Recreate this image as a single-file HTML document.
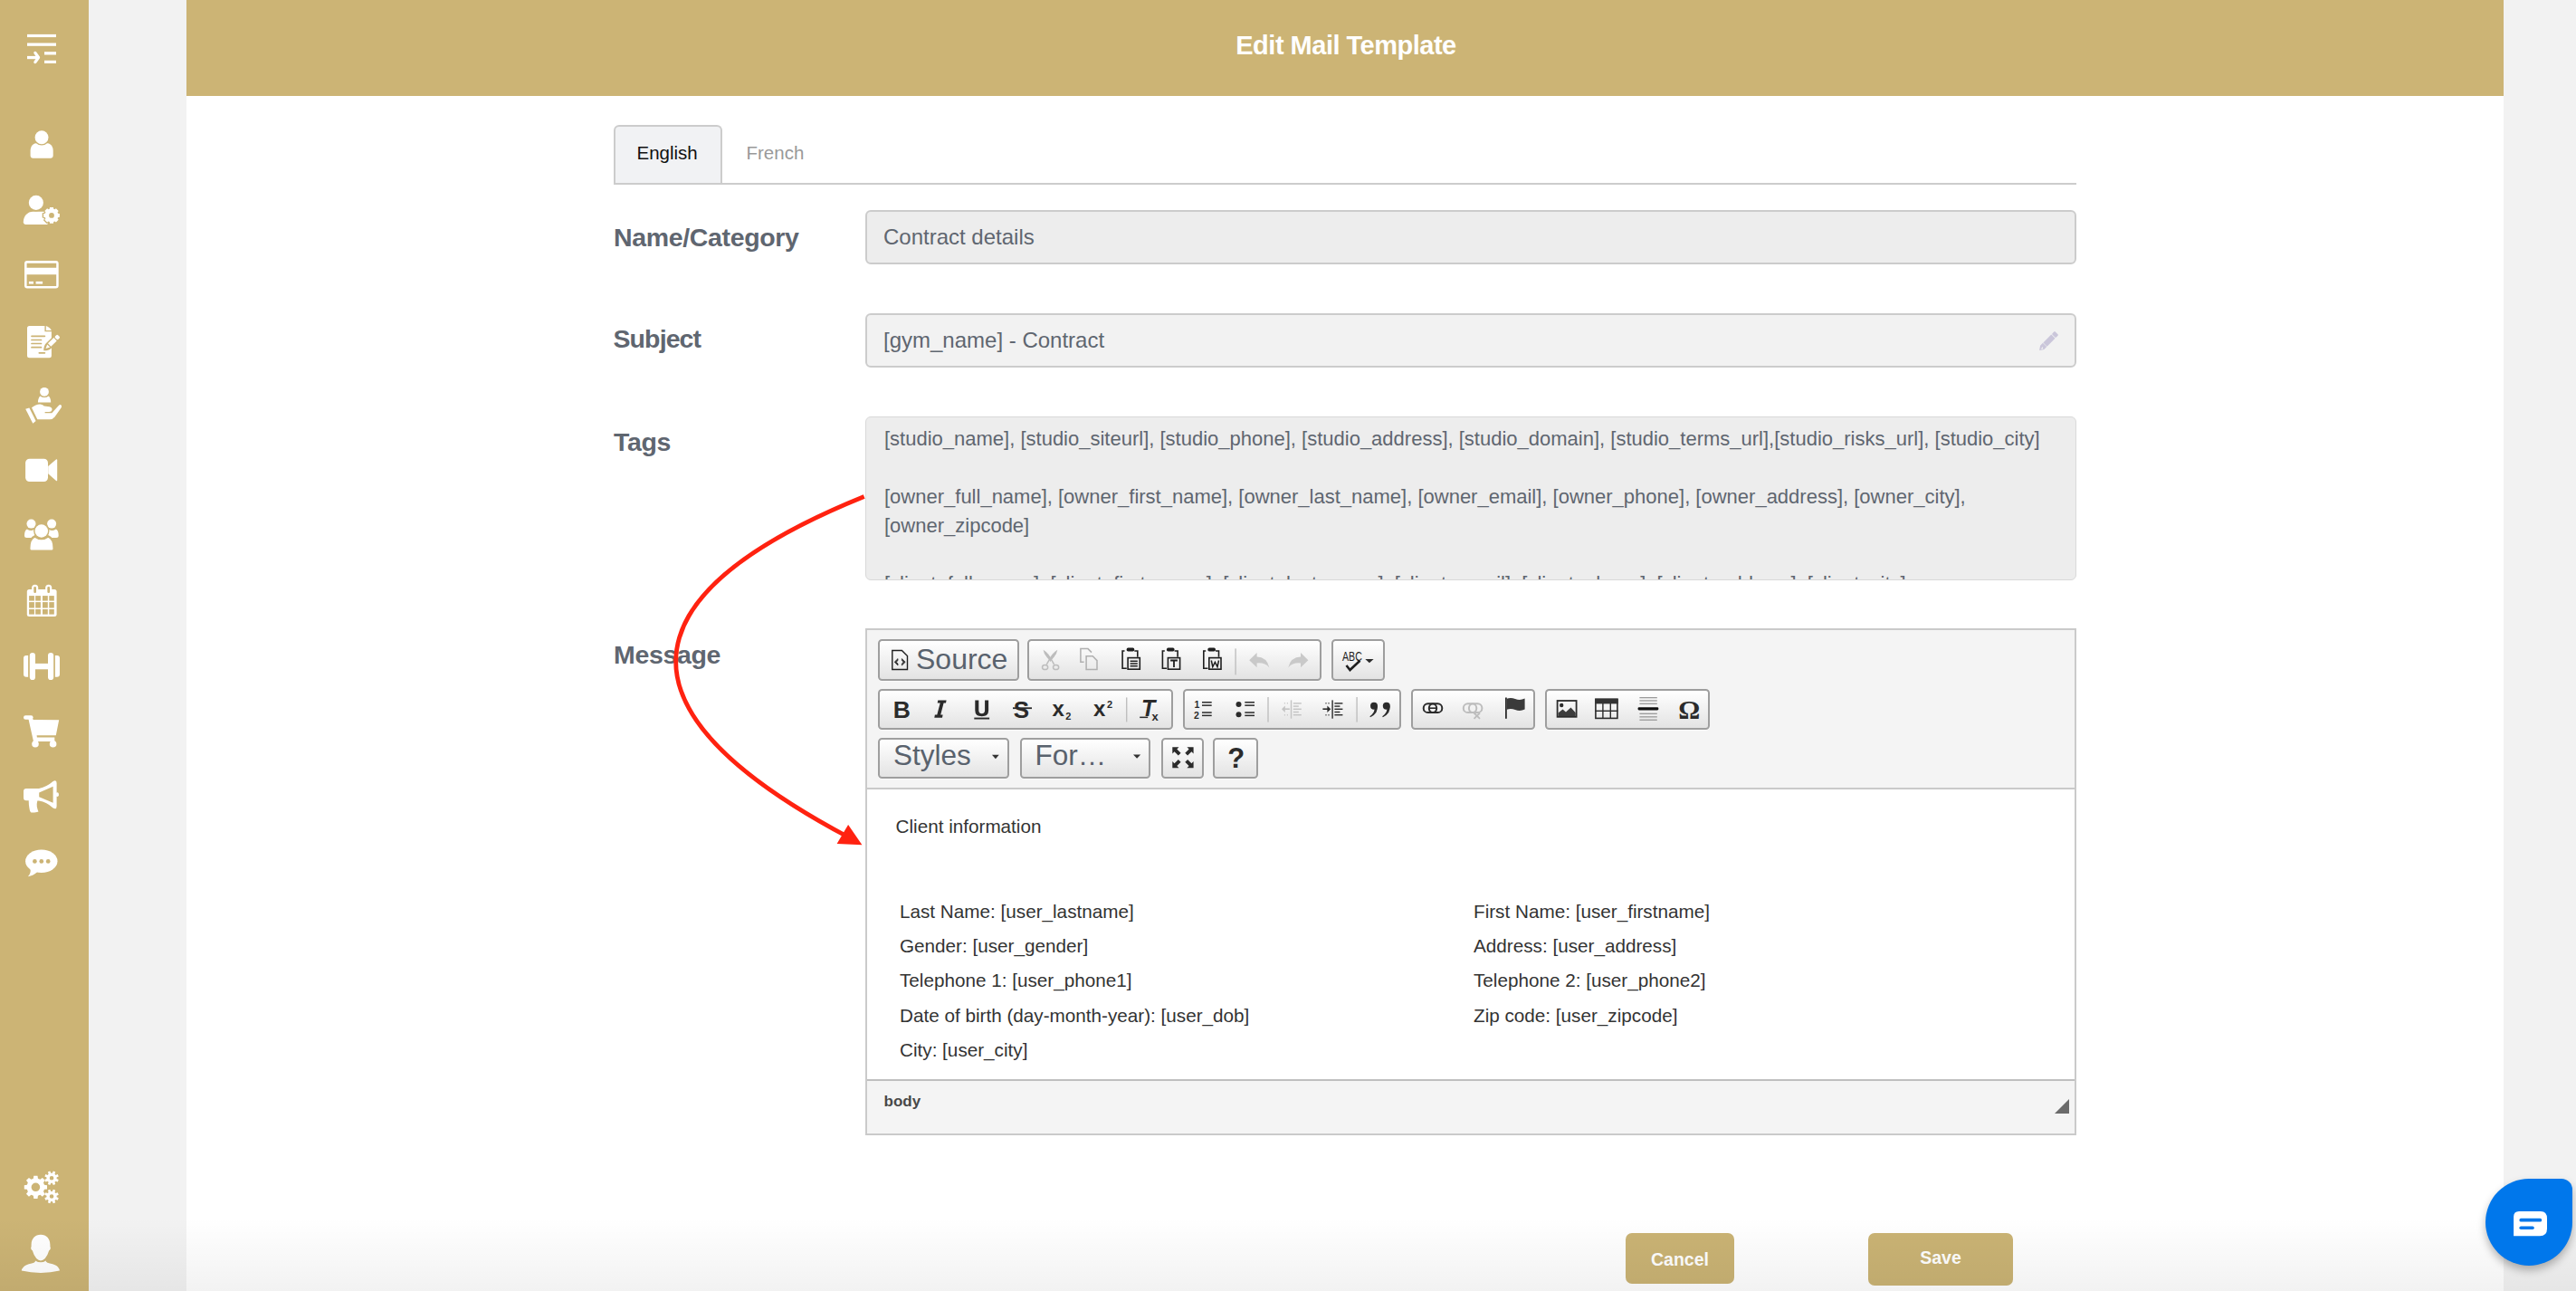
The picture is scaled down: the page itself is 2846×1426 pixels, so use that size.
<!DOCTYPE html>
<html><head><meta charset="utf-8">
<style>
*{box-sizing:border-box}
html,body{margin:0;padding:0}
body{width:2846px;height:1426px;position:relative;overflow:hidden;background:#F2F2F2;font-family:"Liberation Sans",sans-serif}
.a{position:absolute}
.t{position:absolute;white-space:nowrap;line-height:1}
#side{left:0;top:0;width:98px;height:1426px;background:#CCB475}
#card{left:206px;top:0;width:2560px;height:1426px;background:#fff}
#hdr{left:206px;top:0;width:2560px;height:106px;background:#CCB475}
.lbl{font-weight:700;color:#5F6670;font-size:28.5px;letter-spacing:-0.35px}
.inp{left:956px;width:1338px;border:2px solid #CCCCCC;border-radius:6px}
.grp{position:absolute;border:2px solid #9E9E9E;border-radius:4.5px;background:linear-gradient(#FFFFFF,#E3E3E3);box-shadow:0 1px 0 rgba(255,255,255,.5)}
.ct{font-size:20.7px;color:#333}
.btn{position:absolute;background:#CAB374;border-radius:7px;color:#fff;font-weight:700}
</style></head><body>
<div id="side" class="a"></div>
<div id="card" class="a"></div>
<div id="hdr" class="a"></div>
<svg class="a" style="left:0;top:0" width="98" height="1426"><g fill="#fff"><rect x="30" y="37.9" width="32" height="3.2"/><rect x="30" y="47.5" width="32" height="3.3"/><rect x="49" y="57.2" width="13" height="3.3"/><rect x="49" y="66.8" width="13" height="3.2"/><rect x="30" y="61.9" width="11" height="3.3"/></g>
<polyline points="38.9,58.4 42.5,63.5 38.9,68.6" stroke="#fff" stroke-width="3.3" fill="none" stroke-linecap="round" stroke-linejoin="round"/>
<path fill="#fff" d="M33.6,172 L33.6,166.5 C33.6,161.3 37,157.9 41.5,157.9 L50.8,157.9 C55.3,157.9 58.7,161.3 58.7,166.5 L58.7,172 C58.7,173.6 57.4,174.7 55.9,174.7 L36.4,174.7 C34.8,174.7 33.6,173.6 33.6,172Z"/>
<circle cx="46.05" cy="151.7" r="8.9" fill="#CCB475"/><circle cx="46.05" cy="151.7" r="7.45" fill="#fff"/>
<path fill="#fff" d="M25.8,245.3 C25.8,238.6 30.5,233.7 36.5,233.7 L52.5,233.7 L52.5,248 L28.5,248 C27,248 25.8,246.8 25.8,245.3Z"/>
<circle cx="39.85" cy="223.9" r="9.5" fill="#CCB475"/><circle cx="39.85" cy="223.9" r="8.05" fill="#fff"/>
<path fill="#CCB475" d="M65.49,234.92 L67.29,235.34 L67.29,240.46 L65.49,240.88 L65.11,241.80 L66.08,243.37 L62.47,246.98 L60.90,246.01 L59.98,246.39 L59.56,248.19 L54.44,248.19 L54.02,246.39 L53.10,246.01 L51.53,246.98 L47.92,243.37 L48.89,241.80 L48.51,240.88 L46.71,240.46 L46.71,235.34 L48.51,234.92 L48.89,234.00 L47.92,232.43 L51.53,228.82 L53.10,229.79 L54.02,229.41 L54.44,227.61 L59.56,227.61 L59.98,229.41 L60.90,229.79 L62.47,228.82 L66.08,232.43 L65.11,234.00Z"/>
<path fill="#fff" fill-rule="evenodd" d="M64.05,235.64 L65.89,235.95 L65.89,239.85 L64.05,240.16 L63.58,241.29 L64.66,242.81 L61.91,245.56 L60.39,244.48 L59.26,244.95 L58.95,246.79 L55.05,246.79 L54.74,244.95 L53.61,244.48 L52.09,245.56 L49.34,242.81 L50.42,241.29 L49.95,240.16 L48.11,239.85 L48.11,235.95 L49.95,235.64 L50.42,234.51 L49.34,232.99 L52.09,230.24 L53.61,231.32 L54.74,230.85 L55.05,229.01 L58.95,229.01 L59.26,230.85 L60.39,231.32 L61.91,230.24 L64.66,232.99 L63.58,234.51Z M54.10,237.90 a2.9,2.9 0 1,0 5.8,0 a2.9,2.9 0 1,0 -5.8,0Z"/>
<path fill="#fff" fill-rule="evenodd" d="M30,288.1 L61.7,288.1 Q64.7,288.1 64.7,291.1 L64.7,315.5 Q64.7,318.5 61.7,318.5 L30,318.5 Q27,318.5 27,315.5 L27,291.1 Q27,288.1 30,288.1Z M29.6,290.8 L62.2,290.8 L62.2,295.7 L29.6,295.7Z M29.6,303.2 L62.2,303.2 L62.2,316 L29.6,316Z"/>
<rect x="31.9" y="310.9" width="5.1" height="2.7" fill="#fff"/><rect x="39.6" y="310.9" width="7.5" height="2.7" fill="#fff"/>
<path fill="#fff" d="M32.5,360 L49.4,360 L49.4,366.2 L56.9,366.2 L56.9,392.7 Q56.9,395.2 54.4,395.2 L32.5,395.2 Q30,395.2 30,392.7 L30,362.5 Q30,360 32.5,360Z"/>
<path fill="#fff" d="M50.8,360.1 Q54.5,361 56.9,365 L50.8,365Z"/>
<g stroke="#CCB475" stroke-width="1.7" stroke-linecap="round"><line x1="35" y1="371.3" x2="49.4" y2="371.3"/><line x1="35" y1="375.5" x2="45.5" y2="375.5"/><line x1="35" y1="379.5" x2="45.5" y2="379.5"/><line x1="35" y1="383.7" x2="45.5" y2="383.7"/><line x1="43.3" y1="389.8" x2="49.4" y2="389.8"/></g>
<g transform="translate(48.8,386.8) rotate(-44.6)"><path fill="#CCB475" d="M-0.8,0 Q3,-3.9 7,-3.9 L22.2,-3.9 Q24.1,-3.9 24.1,-2 L24.1,2 Q24.1,3.9 22.2,3.9 L7,3.9 Q3,3.9 -0.8,0Z"/>
<rect x="18.3" y="-2.4" width="4.3" height="4.8" rx="1.3" fill="#fff"/><rect x="8.2" y="-2.4" width="9" height="4.8" fill="#fff"/><path fill="#fff" d="M2.4,0 L6.9,-2.2 L6.9,2.2Z"/></g>
<circle cx="49" cy="432.8" r="4.9" fill="#fff"/>
<path fill="#fff" d="M41.9,444.5 Q42,439.6 44.3,437.4 Q49,440.6 53.8,437.4 Q56.2,439.6 56.2,444.5Z"/>
<path fill="#fff" d="M28.2,451.8 L32.4,450.6 L39.6,465.1 L36.3,467.8Z"/>
<path fill="#fff" d="M35,450.3 Q40,446.2 44.5,446.5 Q47.5,446.8 48.7,448.5 L54.5,449.2 Q57.8,450 57.5,452.5 Q57,455 54,455 L49.6,455 L49.6,456.3 L57.3,456.3 L65,447.8 Q66.5,446.5 67.6,447.6 Q68.6,448.8 67.7,450.2 L60.5,460.5 Q58.5,463.2 55,463.2 L41.3,463.2Z"/>
<rect x="28.1" y="506.8" width="24.9" height="25.2" rx="4.5" fill="#fff"/>
<path fill="#fff" d="M53.2,514.9 L62,507.4 Q63.2,506.8 63.2,508.2 L63.2,530.6 Q63.2,531.8 62,531 L53.2,523.2Z"/>
<path fill="#fff" d="M27,591.5 Q27,585.8 29.8,584.4 Q34.5,587.5 38.8,584.6 L38.8,594 L29.5,594 Q27,594 27,591.5Z"/>
<path fill="#fff" d="M64.7,591.5 Q64.7,585.8 61.9,584.4 Q57.2,587.5 52.9,584.6 L52.9,594 L62.2,594 Q64.7,594 64.7,591.5Z"/>
<circle cx="34.5" cy="578.6" r="5" fill="#fff"/><circle cx="57.1" cy="578.6" r="5" fill="#fff"/>
<circle cx="45.8" cy="586.5" r="8.7" fill="#CCB475"/>
<path fill="#fff" stroke="#CCB475" stroke-width="2.6" d="M32.1,606 Q32.1,595 38.5,592.4 Q45.8,597.6 53.2,592.4 Q59.8,595 59.8,606 Q59.8,608.9 57,608.9 L35,608.9 Q32.1,608.9 32.1,606Z"/>
<circle cx="45.8" cy="586.5" r="7.24" fill="#fff"/>
<rect x="29.8" y="650.9" width="32.8" height="30" rx="2.5" fill="#fff"/>
<g fill="#CCB475"><rect x="32.1" y="658.1" width="5.8" height="5.5"/><rect x="32.1" y="665.1" width="5.8" height="6.4"/><rect x="32.1" y="673" width="5.8" height="5.6"/><rect x="39.2" y="658.1" width="5.7" height="5.5"/><rect x="39.2" y="665.1" width="5.7" height="6.4"/><rect x="39.2" y="673" width="5.7" height="5.6"/><rect x="47" y="658.1" width="5.8" height="5.5"/><rect x="47" y="665.1" width="5.8" height="6.4"/><rect x="47" y="673" width="5.8" height="5.6"/><rect x="54.3" y="658.1" width="5.5" height="5.5"/><rect x="54.3" y="665.1" width="5.5" height="6.4"/><rect x="54.3" y="673" width="5.5" height="5.6"/></g>
<rect x="35.1" y="645.8" width="7.1" height="9.5" rx="3.5" fill="#fff"/><rect x="50.15" y="645.8" width="7.1" height="9.5" rx="3.5" fill="#fff"/>
<rect x="37.3" y="648" width="2.7" height="7" rx="1.3" fill="#CCB475"/><rect x="52.35" y="648" width="2.7" height="7" rx="1.3" fill="#CCB475"/>
<g fill="#fff"><path d="M31.1,723.9 L31.1,747.8 L29,747.8 Q26,747.8 26,744.8 L26,726.9 Q26,723.9 29,723.9Z"/>
<rect x="32.8" y="720.9" width="6.2" height="30.1" rx="3.1"/><rect x="39" y="732.9" width="14" height="6.4"/>
<rect x="53" y="720.9" width="6.2" height="30.1" rx="3.1"/>
<path d="M60.9,723.9 L60.9,747.8 L63,747.8 Q66,747.8 66,744.8 L66,726.9 Q66,723.9 63,723.9Z"/></g>
<g fill="#fff"><rect x="26" y="790.3" width="10.6" height="4.5" rx="2.2"/>
<path d="M31.4,794 L36.4,794 L36.6,795 L65.2,795.2 L61.8,812.2 L40.6,812.2 L40.9,814.6 L60.3,814.6 L60.3,819 L37,819Z"/>
<circle cx="39" cy="821.8" r="3.8"/><circle cx="58.6" cy="821.8" r="3.8"/></g>
<path fill="#fff" fill-rule="evenodd" d="M26,874 Q26,871 29,871 L43,871 Q52,869 58.3,863.3 Q62.6,860.5 62.6,865 L62.6,890.5 Q62.6,895 58.3,892.2 Q52,886.2 43,884.5 L41.3,884.5 Q40.4,888 40.8,891 Q41.4,894 42.5,896.6 Q41.5,897.4 38,897.4 L34.5,897.4 Q33,897 32.5,893 Q31.7,889 31.7,884.2 L29,884.2 Q26,884.2 26,881Z M43.2,875.4 L58.6,868.8 L58.6,886.8 L43.2,880.2Z"/>
<rect x="61.5" y="875.3" width="3.4" height="4.8" rx="1.8" fill="#fff"/>
<ellipse cx="45.8" cy="951.3" rx="17.7" ry="12.7" fill="#fff"/>
<path fill="#fff" d="M33.5,959 Q34.5,965 30.9,968.2 Q36.5,967.5 42,962.5Z"/>
<g fill="#CCB475"><circle cx="38.4" cy="951.4" r="2.35"/><circle cx="45.8" cy="951.4" r="2.35"/><circle cx="53.2" cy="951.4" r="2.35"/></g>
<path fill="#fff" fill-rule="evenodd" d="M48.97,1308.76 L52.03,1309.20 L52.03,1313.40 L48.97,1313.84 L47.96,1316.27 L49.81,1318.74 L46.84,1321.71 L44.37,1319.86 L41.94,1320.87 L41.50,1323.93 L37.30,1323.93 L36.86,1320.87 L34.43,1319.86 L31.96,1321.71 L28.99,1318.74 L30.84,1316.27 L29.83,1313.84 L26.77,1313.40 L26.77,1309.20 L29.83,1308.76 L30.84,1306.33 L28.99,1303.86 L31.96,1300.89 L34.43,1302.74 L36.86,1301.73 L37.30,1298.67 L41.50,1298.67 L41.94,1301.73 L44.37,1302.74 L46.84,1300.89 L49.81,1303.86 L47.96,1306.33Z M34.60,1311.30 a4.8,4.8 0 1,0 9.6,0 a4.8,4.8 0 1,0 -9.6,0Z"/>
<path fill="#fff" fill-rule="evenodd" d="M62.60,1302.05 L64.75,1303.08 L63.75,1305.48 L61.50,1304.70 L60.45,1305.75 L61.23,1308.00 L58.83,1309.00 L57.80,1306.85 L56.30,1306.85 L55.27,1309.00 L52.87,1308.00 L53.65,1305.75 L52.60,1304.70 L50.35,1305.48 L49.35,1303.08 L51.50,1302.05 L51.50,1300.55 L49.35,1299.52 L50.35,1297.12 L52.60,1297.90 L53.65,1296.85 L52.87,1294.60 L55.27,1293.60 L56.30,1295.75 L57.80,1295.75 L58.83,1293.60 L61.23,1294.60 L60.45,1296.85 L61.50,1297.90 L63.75,1297.12 L64.75,1299.52 L62.60,1300.55Z M54.75,1301.30 a2.3,2.3 0 1,0 4.6,0 a2.3,2.3 0 1,0 -4.6,0Z"/>
<path fill="#fff" fill-rule="evenodd" d="M62.60,1322.25 L64.75,1323.28 L63.75,1325.68 L61.50,1324.90 L60.45,1325.95 L61.23,1328.20 L58.83,1329.20 L57.80,1327.05 L56.30,1327.05 L55.27,1329.20 L52.87,1328.20 L53.65,1325.95 L52.60,1324.90 L50.35,1325.68 L49.35,1323.28 L51.50,1322.25 L51.50,1320.75 L49.35,1319.72 L50.35,1317.32 L52.60,1318.10 L53.65,1317.05 L52.87,1314.80 L55.27,1313.80 L56.30,1315.95 L57.80,1315.95 L58.83,1313.80 L61.23,1314.80 L60.45,1317.05 L61.50,1318.10 L63.75,1317.32 L64.75,1319.72 L62.60,1320.75Z M54.75,1321.50 a2.3,2.3 0 1,0 4.6,0 a2.3,2.3 0 1,0 -4.6,0Z"/>
<path fill="#fff" d="M45,1363.8 C51.2,1363.8 55.4,1368.2 55.4,1375 L55.4,1377 Q56.2,1377.5 55.6,1379.8 Q55,1381 54.2,1381.3 Q52.8,1386.5 49.8,1390 Q47.5,1392.4 45,1392.4 Q42.5,1392.4 40.2,1390 Q37.2,1386.5 35.8,1381.3 Q35,1381 34.4,1379.8 Q33.8,1377.5 34.6,1377 L34.6,1375 C34.6,1368.2 38.8,1363.8 45,1363.8Z"/>
<path fill="#fff" d="M38.9,1392.4 Q42,1394.3 45,1394.3 Q48,1394.3 50.8,1392.4 L50.8,1393.5 Q52,1395 55,1395.6 Q62,1397 64,1399.5 Q66,1402 65.9,1403.6 Q56,1406 45,1406 Q34,1406 23.8,1403.6 Q24,1401.5 26,1399.5 Q28,1397 35,1395.6 Q38,1395 38.9,1393.5Z"/></svg>
<div class="t" style="left:207px;width:2560px;text-align:center;top:35.6px;font-size:29px;letter-spacing:-0.5px;font-weight:700;color:#fff">Edit Mail Template</div>

<!-- tabs -->
<div class="a" style="left:678px;top:138px;width:120px;height:66px;background:#F1F2F4;border:2px solid #CCCCCC;border-bottom:none;border-radius:6px 6px 0 0"></div>
<div class="a" style="left:678px;top:202px;width:1616px;height:2px;background:#CCCCCC"></div>
<div class="t" style="left:703.5px;top:158.8px;font-size:20.5px;color:#111">English</div>
<div class="t" style="left:824.5px;top:158.8px;font-size:20.5px;color:#999">French</div>

<!-- name -->
<div class="t lbl" style="left:678px;top:247.5px">Name/Category</div>
<div class="a inp" style="top:232px;height:60px;background:#EDEDED"></div>
<div class="t" style="left:976px;top:249.9px;font-size:24px;color:#5F6670">Contract details</div>

<!-- subject -->
<div class="t lbl" style="left:677.5px;top:359.5px;letter-spacing:-0.9px">Subject</div>
<div class="a inp" style="top:346px;height:60px;background:#F2F2F2"></div>
<div class="t" style="left:976px;top:364.2px;font-size:24px;color:#5F6670">[gym_name] - Contract</div>

<svg class="a" style="left:2250px;top:362px" width="30" height="28"><g transform="rotate(-45 14 14)"><path d="M3,11 L7,11 L7,17 L3,17 L-1.5,14Z" fill="#CAC6DA"/><rect x="7.6" y="11" width="12.6" height="6" fill="#CAC6DA"/><rect x="21" y="11" width="4.5" height="6" rx="1" fill="#CAC6DA"/></g><path d="M4.5,23.5 L7,21 L7.2,23.5Z" fill="#F2F2F2"/></svg>
<!-- tags -->
<div class="t lbl" style="left:678px;top:474.3px">Tags</div>
<div class="a" style="left:956px;top:460px;width:1338px;height:181px;border:1px solid #D9D9D9;border-radius:6px;background:#EDEDED;overflow:hidden">
<div style="position:absolute;left:20px;top:8.3px;font-size:22px;line-height:32px;color:#5F6670;white-space:nowrap">[studio_name], [studio_siteurl], [studio_phone], [studio_address], [studio_domain], [studio_terms_url],[studio_risks_url], [studio_city]<br>&nbsp;<br>[owner_full_name], [owner_first_name], [owner_last_name], [owner_email], [owner_phone], [owner_address], [owner_city],<br>[owner_zipcode]<br>&nbsp;<br>[client_full_name], [client_first_name], [client_last_name], [client_email], [client_phone], [client_address], [client_city]</div>
</div>

<!-- message -->
<div class="t lbl" style="left:678px;top:709.3px">Message</div>
<div class="a" style="left:956px;top:694px;width:1338px;height:560px;border:2px solid #CACACA;background:#F4F4F4"></div>
<div class="a" style="left:958px;top:870px;width:1334px;height:2px;background:#C9C9C9"></div>
<div class="a" style="left:958px;top:872px;width:1334px;height:320px;background:#fff"></div>
<div class="a" style="left:958px;top:1192px;width:1334px;height:2px;background:#BFBFBF"></div>
<div class="a" style="left:958px;top:1194px;width:1334px;height:58px;background:#F4F4F4"></div>
<div class="t" style="left:976.5px;top:1208px;font-size:17px;font-weight:700;color:#484848">body</div>
<svg class="a" style="left:2270px;top:1214px" width="17" height="16"><path d="M16 0V16H0Z" fill="#6B6B6B"/></svg>

<!-- toolbar groups -->
<div class="grp" style="left:970px;top:706px;width:156px;height:45.5px"></div>
<div class="grp" style="left:1134.5px;top:706px;width:325px;height:45.5px"></div>
<div class="grp" style="left:1470.5px;top:706px;width:59px;height:45.5px"></div>
<div class="grp" style="left:970px;top:760.5px;width:325.5px;height:45px"></div>
<div class="grp" style="left:1306.5px;top:760.5px;width:241px;height:45px"></div>
<div class="grp" style="left:1558.5px;top:760.5px;width:137px;height:45px"></div>
<div class="grp" style="left:1706.5px;top:760.5px;width:182.5px;height:45px"></div>
<div class="grp" style="left:970px;top:814.5px;width:145px;height:45px"></div>
<div class="grp" style="left:1126.5px;top:814.5px;width:144.5px;height:45px"></div>
<div class="grp" style="left:1282.5px;top:814.5px;width:47px;height:45px"></div>
<div class="grp" style="left:1340px;top:814.5px;width:49.5px;height:45px"></div>
<div class="t" style="left:1012px;top:712px;font-size:32px;color:#59626D">Source</div>
<div class="t" style="left:987px;top:818.9px;font-size:31.5px;color:#59626D">Styles</div>
<div class="t" style="left:1143.5px;top:818.9px;font-size:31.5px;color:#59626D">For…</div>

<svg class="a" style="left:0;top:0" width="2846" height="1426"><path d="M985.8,718.5 L996.4,718.5 L1002.5,724.6 L1002.5,739.5 L985.8,739.5Z" fill="none" stroke="#1E1E1E" stroke-width="1.4"/>
<path d="M992,727.6 L988.2,731.3 L992,735 L992,733 L990.2,731.3 L992,729.6Z M996.4,727.6 L1000.2,731.3 L996.4,735 L996.4,733 L998.2,731.3 L996.4,729.6Z" fill="#333" stroke="#333" stroke-width="0.8"/>
<g fill="#BDBDBD"><path d="M1152.6,717.8 Q1155.5,719.5 1158.5,723 L1162.2,728.2 L1160.6,730.8 L1156.2,725.5 Q1153,721.5 1152.6,717.8Z"/>
<path d="M1168.3,717.8 Q1165.4,719.5 1162.4,723 L1158.7,728.2 L1160.3,730.8 L1164.7,725.5 Q1167.9,721.5 1168.3,717.8Z"/></g>
<g stroke="#BDBDBD" fill="none" stroke-width="1.5"><path d="M1159.2,728.8 L1156.3,733.8"/><path d="M1161.7,728.8 L1164.6,733.8"/>
<ellipse cx="1154.6" cy="737" rx="3.1" ry="2.6"/><ellipse cx="1166.6" cy="737" rx="3.1" ry="2.6"/></g>
<g stroke="#B0B0B0" fill="none" stroke-width="1.5"><path d="M1197.6,731.3 L1193.9,731.3 L1193.9,716.6 L1202,716.6 L1206,720.6"/>
<path d="M1200.1,724.8 L1207.2,724.8 L1212,729.6 L1212,739.6 L1200.1,739.6Z"/></g>
<g stroke="#1E1E1E" fill="none" stroke-width="1.6"><path d="M1242.5,719 L1240.1,719 L1240.1,738.3 L1244.8,738.3"/><path d="M1253.3,719 L1256.8,719 L1256.8,725.8"/>
<rect x="1246.1" y="726.6" width="13.2" height="12.6"/></g>
<rect x="1244.6" y="715.6" width="8.7" height="4" rx="1.8" fill="#1E1E1E"/><g stroke="#1E1E1E" stroke-width="1.5"><line x1="1248.6" y1="730.3" x2="1256.8" y2="730.3"/><line x1="1248.6" y1="733" x2="1256.8" y2="733"/><line x1="1248.6" y1="735.7" x2="1256.8" y2="735.7"/></g>
<g stroke="#1E1E1E" fill="none" stroke-width="1.6"><path d="M1286.8,719 L1284.3999999999999,719 L1284.3999999999999,738.3 L1289.1,738.3"/><path d="M1297.6,719 L1301.1,719 L1301.1,725.8"/>
<rect x="1290.3999999999999" y="726.6" width="13.2" height="12.6"/></g>
<rect x="1288.8999999999999" y="715.6" width="8.7" height="4" rx="1.8" fill="#1E1E1E"/><path d="M1293.1,729.5 L1300.8999999999999,729.5 M1297.0,729.5 L1297.0,737" stroke="#1E1E1E" stroke-width="1.8" fill="none"/>
<g stroke="#1E1E1E" fill="none" stroke-width="1.6"><path d="M1332.2,719 L1329.8,719 L1329.8,738.3 L1334.5,738.3"/><path d="M1343.0,719 L1346.5,719 L1346.5,725.8"/>
<rect x="1335.8" y="726.6" width="13.2" height="12.6"/></g>
<rect x="1334.3" y="715.6" width="8.7" height="4" rx="1.8" fill="#1E1E1E"/><polyline points="1338.3,729.5 1339.8,736.5 1342.4,731.5 1345.0,736.5 1346.5,729.5" stroke="#1E1E1E" stroke-width="1.5" fill="none"/>
<g fill="#BFBFBF"><rect x="1364.4" y="716.4" width="1.4" height="29"/><rect x="1244" y="770.4" width="1.4" height="27"/><rect x="1400.3" y="770" width="1.4" height="27.6"/><rect x="1498.4" y="770" width="1.4" height="27.6"/></g>
<path fill="#C9C9C9" d="M1380.2,729.2 L1388.6,721 L1388.6,725.6 Q1399.5,725.8 1402.4,737.4 Q1397.5,731.6 1388.6,732.4 L1388.6,737.2Z"/>
<g transform="translate(2825.6,0) scale(-1,1)"><path fill="#C9C9C9" d="M1380.2,729.2 L1388.6,721 L1388.6,725.6 Q1399.5,725.8 1402.4,737.4 Q1397.5,731.6 1388.6,732.4 L1388.6,737.2Z"/></g>
<text x="1483" y="729.8" font-family="Liberation Sans" font-size="14" textLength="21.8" lengthAdjust="spacingAndGlyphs" fill="#1E1E1E">ABC</text>
<polyline points="1487.5,735 1491.5,740 1502.5,729.8" fill="none" stroke="#1E1E1E" stroke-width="2.6"/>
<path d="M1508.3,728 L1517.6,728 L1512.95,732.2Z" fill="#2B2B2B"/>
<text x="986.7" y="792.7" font-family="Liberation Sans" font-weight="700" font-size="26.5" fill="#2B2B2B">B</text>
<path fill="#2B2B2B" d="M1036.3,773.4 L1045.6,773.4 L1045,776.6 L1042.6,776.6 L1039.2,789.5 L1041.6,789.5 L1041,792.7 L1032.3,792.7 L1032.9,789.5 L1035.3,789.5 L1038.7,776.6 L1035.7,776.6Z"/>
<path fill="#2B2B2B" d="M1077.3,773.4 L1081.3,773.4 L1081.3,784.5 Q1081.3,788.2 1084.7,788.2 Q1088.1,788.2 1088.1,784.5 L1088.1,773.4 L1092.1,773.4 L1092.1,784.8 Q1092.1,791.3 1084.7,791.3 Q1077.3,791.3 1077.3,784.8Z"/>
<rect x="1076.3" y="792.6" width="16.8" height="1.9" fill="#2B2B2B"/>
<text x="1119.8" y="792.7" font-family="Liberation Sans" font-weight="700" font-size="26" fill="#2B2B2B">S</text>
<rect x="1119" y="781.3" width="21" height="1.8" fill="#2B2B2B"/>
<text x="1162.5" y="790.5" font-family="Liberation Sans" font-weight="700" font-size="24" fill="#2B2B2B">x</text>
<text x="1177.3" y="794.5" font-family="Liberation Sans" font-weight="700" font-size="11" fill="#2B2B2B">2</text>
<text x="1208" y="790.5" font-family="Liberation Sans" font-weight="700" font-size="24" fill="#2B2B2B">x</text>
<text x="1223" y="781.5" font-family="Liberation Sans" font-weight="700" font-size="11" fill="#2B2B2B">2</text>
<text x="1261" y="790.5" font-family="Liberation Sans" font-weight="700" font-style="italic" font-size="25" fill="#2B2B2B">T</text>
<rect x="1259.2" y="791.6" width="9" height="1.5" fill="#2B2B2B"/>
<text x="1272.5" y="795.5" font-family="Liberation Sans" font-weight="700" font-size="13" fill="#2B2B2B">x</text>
<text x="1319.5" y="782.4" font-family="Liberation Sans" font-weight="700" font-size="10.5" fill="#2B2B2B">1</text>
<text x="1319" y="794.3" font-family="Liberation Sans" font-weight="700" font-size="10.5" fill="#2B2B2B">2</text>
<g fill="#2B2B2B"><rect x="1328" y="775" width="10.7" height="1.5"/><rect x="1328" y="778.4" width="10.7" height="1.5"/><rect x="1328" y="786.3" width="10.7" height="1.5"/><rect x="1328" y="789.6" width="10.7" height="1.5"/>
<circle cx="1368.5" cy="777.9" r="3"/><circle cx="1368.5" cy="789.2" r="3"/>
<rect x="1375.3" y="775" width="10.7" height="1.5"/><rect x="1375.3" y="778.4" width="10.7" height="1.5"/><rect x="1375.3" y="786.3" width="10.7" height="1.5"/><rect x="1375.3" y="789.6" width="10.7" height="1.5"/></g>
<g fill="#C4C4C4"><rect x="1425.8" y="773.4" width="1.4" height="20.3"/><rect x="1428.8" y="776.2" width="9" height="1.4"/><rect x="1428.8" y="779.4" width="6" height="1.4"/><rect x="1428.8" y="782.6" width="9" height="1.4"/><rect x="1428.8" y="785.8" width="6" height="1.4"/><rect x="1428.8" y="789" width="9" height="1.4"/><rect x="1418.8" y="776.2" width="1.2" height="1.2"/><rect x="1421.8" y="776.2" width="1.2" height="1.2"/><rect x="1418.8" y="789.2" width="1.2" height="1.2"/><rect x="1421.8" y="789.2" width="1.2" height="1.2"/><rect x="1418.8" y="782.4" width="6" height="1.6"/><path d="M1419.8,779.5 L1416.0,783.2 L1419.8,786.9Z"/></g>
<g fill="#2B2B2B"><rect x="1471.4" y="773.4" width="1.4" height="20.3"/><rect x="1474.4" y="776.2" width="9" height="1.4"/><rect x="1474.4" y="779.4" width="6" height="1.4"/><rect x="1474.4" y="782.6" width="9" height="1.4"/><rect x="1474.4" y="785.8" width="6" height="1.4"/><rect x="1474.4" y="789" width="9" height="1.4"/><rect x="1464.4" y="776.2" width="1.2" height="1.2"/><rect x="1467.4" y="776.2" width="1.2" height="1.2"/><rect x="1464.4" y="789.2" width="1.2" height="1.2"/><rect x="1467.4" y="789.2" width="1.2" height="1.2"/><rect x="1461.4" y="782.4" width="6" height="1.6"/><path d="M1466.4,779.5 L1470.2,783.2 L1466.4,786.9Z"/></g>
<circle cx="1518" cy="779.8" r="4" fill="#2B2B2B"/><path fill="#2B2B2B" d="M1521.7,779.5 Q1523,788 1514,792.2 L1513.4,791.3 Q1518.2,787.8 1518.5,783.5Z"/>
<circle cx="1531.8" cy="779.8" r="4" fill="#2B2B2B"/><path fill="#2B2B2B" d="M1535.5,779.5 Q1536.8,788 1527.8,792.2 L1527.2,791.3 Q1532,787.8 1532.3,783.5Z"/>
<g fill="none" stroke="#2B2B2B" stroke-width="2"><rect x="1572.7" y="777.3" width="14.5" height="9.8" rx="4.9"/><rect x="1578.8" y="777.3" width="14.5" height="9.8" rx="4.9"/></g>
<rect x="1578" y="781.4" width="10" height="1.6" fill="#2B2B2B"/>
<g fill="none" stroke="#BDBDBD" stroke-width="2"><rect x="1616.8" y="777.3" width="14.5" height="9.8" rx="4.9"/><rect x="1622.9" y="777.3" width="14.5" height="9.8" rx="4.9"/></g>
<g stroke="#BDBDBD" stroke-width="1.8"><line x1="1628.5" y1="787.5" x2="1635" y2="793.8"/><line x1="1635" y1="787.5" x2="1628.5" y2="793.8"/></g>
<rect x="1663" y="770.5" width="1.8" height="23.3" fill="#2B2B2B"/>
<path fill="#3A3A3A" d="M1664.8,771.8 Q1669,770 1674,772 Q1679.5,774 1684.6,771.5 L1684.6,783.5 Q1679.5,786 1674,784 Q1669,782 1664.8,783.8Z"/>
<rect x="1720.6" y="774" width="21" height="17.8" fill="none" stroke="#2B2B2B" stroke-width="1.8"/>
<circle cx="1725.2" cy="779" r="2.2" fill="#2B2B2B"/>
<path fill="#3C3C3C" d="M1721.5,790.9 L1721.5,787.5 L1726.5,783.5 L1730,786.5 L1735.5,781.6 L1740.7,787.3 L1740.7,790.9Z"/>
<rect x="1762.9" y="772.4" width="24" height="21" fill="none" stroke="#2B2B2B" stroke-width="1.6"/>
<rect x="1762.1" y="771.6" width="25.6" height="5.8" fill="#333"/>
<g fill="#2B2B2B"><rect x="1770.2" y="777" width="1.4" height="17"/><rect x="1778.6" y="777" width="1.4" height="17"/><rect x="1762.5" y="784.6" width="25" height="1.4"/></g>
<g fill="#9A9A9A"><rect x="1811.4" y="770" width="19.4" height="1.3"/><rect x="1811.4" y="773.3" width="19.4" height="1.3"/><rect x="1811.4" y="776.7" width="19.4" height="1.3"/>
<rect x="1811.4" y="787.7" width="19.4" height="1.3"/><rect x="1811.4" y="791.2" width="19.4" height="1.3"/><rect x="1811.4" y="794.6" width="19.4" height="1.3"/></g>
<rect x="1809.5" y="781.3" width="22.9" height="3.1" rx="1.4" fill="#111"/>
<text x="1854.2" y="794.1" font-family="Liberation Serif" font-weight="700" font-size="30" fill="#2B2B2B">Ω</text>
<path d="M1096,833.8 L1103.8,833.8 L1099.9,838.2Z" fill="#333"/><path d="M1252,833.6 L1260.2,833.6 L1256.1,837.8Z" fill="#333"/>
<g fill="#2B2B2B"><path d="M1295.3,825.3 L1302.5,825.3 L1300.3,827.5 L1304.6,831.8 L1301.8,834.6 L1297.5,830.3 L1295.3,832.5Z"/>
<path d="M1318.6,825.3 L1311.4,825.3 L1313.6,827.5 L1309.3,831.8 L1312.1,834.6 L1316.4,830.3 L1318.6,832.5Z"/>
<path d="M1295.3,848.2 L1302.5,848.2 L1300.3,846 L1304.6,841.7 L1301.8,838.9 L1297.5,843.2 L1295.3,841Z"/>
<path d="M1318.6,848.2 L1311.4,848.2 L1313.6,846 L1309.3,841.7 L1312.1,838.9 L1316.4,843.2 L1318.6,841Z"/></g>
<text x="1356.2" y="848.2" font-family="Liberation Sans" font-weight="700" font-size="31" fill="#2B2B2B">?</text></svg>
<!-- content -->
<div class="t ct" style="left:989.5px;top:902.7px">Client information</div>
<div class="t ct" style="left:994px;top:997.2px">Last Name: [user_lastname]</div>
<div class="t ct" style="left:994px;top:1035.3px">Gender: [user_gender]</div>
<div class="t ct" style="left:994px;top:1073.4px">Telephone 1: [user_phone1]</div>
<div class="t ct" style="left:994px;top:1111.5px">Date of birth (day-month-year): [user_dob]</div>
<div class="t ct" style="left:994px;top:1149.6px">City: [user_city]</div>
<div class="t ct" style="left:1628px;top:997.2px">First Name: [user_firstname]</div>
<div class="t ct" style="left:1628px;top:1035.3px">Address: [user_address]</div>
<div class="t ct" style="left:1628px;top:1073.4px">Telephone 2: [user_phone2]</div>
<div class="t ct" style="left:1628px;top:1111.5px">Zip code: [user_zipcode]</div>

<!-- buttons -->
<div class="btn" style="left:1796px;top:1362px;width:120px;height:56px"></div>
<div class="btn" style="left:2064px;top:1362px;width:160px;height:58px"></div>
<div class="t" style="left:1796px;width:120px;text-align:center;top:1381.5px;font-size:19.5px;font-weight:700;color:#fff">Cancel</div>
<div class="t" style="left:2064px;width:160px;text-align:center;top:1379.5px;font-size:19.5px;font-weight:700;color:#fff">Save</div>

<!-- bottom shade -->
<div class="a" style="left:0;top:1345px;width:2846px;height:81px;background:linear-gradient(rgba(0,0,0,0),rgba(0,0,0,.05))"></div>

<!-- chat bubble -->
<div class="a" style="left:2746px;top:1302px;width:96px;height:96px;background:#0077EB;border-radius:48px 12px 48px 48px;box-shadow:0 5px 10px rgba(0,0,0,.28)"></div>
<svg class="a" style="left:2766px;top:1330px" width="60" height="45"><path d="M17,8 L41,8 Q48,8 48,16 L48,27.3 Q48,35.3 40,35.3 L11.1,35.3 L11.1,14 Q11.1,8 17,8Z" fill="#fff"/>
<rect x="17.4" y="15.8" width="24.8" height="3.7" rx="1.85" fill="#0077EB"/><rect x="17.4" y="24.5" width="16.4" height="3.5" rx="1.75" fill="#0077EB"/></svg>

<!-- red arrow -->
<svg class="a" style="left:0;top:0" width="2846" height="1426">
<path d="M954.7 548.5 C 751.8 630.7, 618.9 756, 938 925" fill="none" stroke="#FF2210" stroke-width="4.8"/>
<path d="M952.4 933.2 L937.1 911 L924.6 932 Z" fill="#FF2210"/>
</svg>
</body></html>
